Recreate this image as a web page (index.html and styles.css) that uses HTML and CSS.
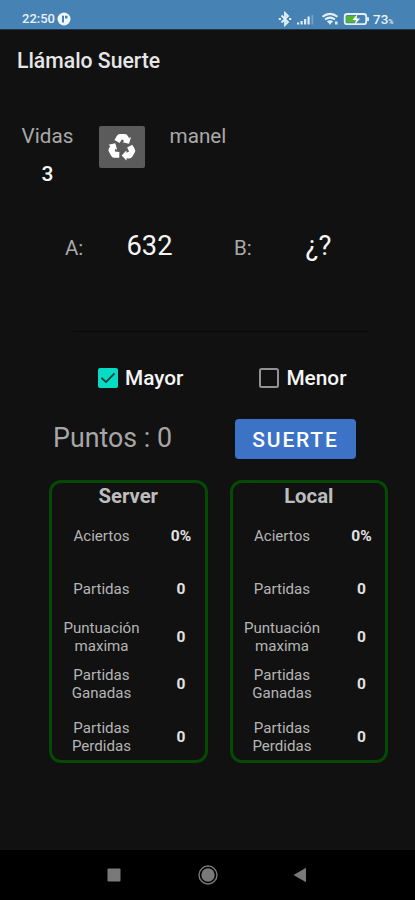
FILE: index.html
```html
<!DOCTYPE html>
<html lang="es">
<head>
<meta charset="utf-8">
<title>Llámalo Suerte</title>
<link rel="stylesheet" href="styles.css">
</head>
<body>
<div class="phone">
  <header class="status">
    <span class="clock">22:50</span>
    <svg class="notice" width="14" height="14" viewBox="0 0 14 14"><circle cx="7" cy="7" r="6.5" fill="#f0f7fc"/><path d="M5 10.500V3.700H7V10.500M8 3.700H10.500V6.500H8Z" fill="#4682b4"/></svg>
    <svg class="system" width="92" height="16" viewBox="0 0 92 16">
      <g fill="none" stroke="#e4f0f8" stroke-width="1.8">
        <path d="M3.500 4.500L10 11L7 14V2L10 5L3.500 11.500"/>
        <path d="M.8 8H3M11 8H13.200" stroke-width="2.200"/>
        <path d="M44.500 5.800Q52 0 59.500 5.800M47 8.500Q52 4.700 57 8.500M49.500 11Q52 9.500 54.500 11" stroke-width="2"/>
        <rect x="66.700" y="3" width="21.500" height="10.200" rx="2.500"/>
      </g>
      <path d="M19 13.500v-2h2.200v2zM22.500 13.500V10h2.200v3.500zM26 13.500V8h2.200v5.500zM29.500 13.500V5.500h2.200v8zM50 11L52 14L54 11ZM57 10.500h2.500v3H57zM89 6.300h2v3.700h-2z" fill="#dcecf6"/>
      <path d="M33.500 4h1.800V13.500h-1.800z" fill="#73a5cc"/>
      <path d="M68.500 5h9.500v6.400h-9.500z" fill="#55b82c"/>
      <path d="M79.500 3L74.500 9H78L76.500 14L82 7.500H78.500Z" fill="#fff"/>
    </svg>
    <span class="charge">73<small>%</small></span>
  </header>
  <h1 class="title">Llámalo Suerte</h1>

  <main class="game">
    <section class="player">
      <div class="lives"><span class="muted">Vidas</span><b>3</b></div>
      <button class="recycle" aria-label="Reiniciar">
        <svg width="28" height="30" viewBox="0 0 28 30">
          <path id="arrow" d="M6.500 8L8.600 4.200Q9.800 2 12 2H16.500Q19 2 20.200 4.400L21 6L23 5.200L21 11.800L14.500 10.200L16.200 9L14 7.300L11.500 11Z"/>
          <use href="#arrow" transform="rotate(120 14 15.500)"/>
          <use href="#arrow" transform="rotate(240 14 15.500)"/>
        </svg>
      </button>
      <span class="name muted">manel</span>
    </section>

    <section class="numbers">
      <span class="letter">A:</span><span class="number">632</span>
      <span class="letter">B:</span><span class="number">¿?</span>
    </section>
    <div class="divider"></div>

    <section class="choices">
      <label class="choice"><svg width="20" height="20" viewBox="0 0 20 20"><rect width="20" height="20" rx="2" fill="#08dbc4"/><path d="M3.500 9.800L8 14.100L16.500 5.300" fill="none" stroke="#123d38" stroke-width="1.800"/></svg>Mayor</label>
      <label class="choice"><svg width="20" height="20" viewBox="0 0 20 20"><rect x="1" y="1" width="18" height="18" rx="1.500" fill="none" stroke="#929292" stroke-width="2"/></svg>Menor</label>
    </section>

    <section class="play">
      <span class="points">Puntos : 0</span>
      <button class="go">SUERTE</button>
    </section>

    <section class="cards">
      <article class="card">
        <h2>Server</h2>
        <dl>
          <dt>Aciertos</dt><dd>0%</dd>
          <dt>Partidas</dt><dd>0</dd>
          <dt>Puntuación<br>maxima</dt><dd>0</dd>
          <dt>Partidas<br>Ganadas</dt><dd>0</dd>
          <dt>Partidas<br>Perdidas</dt><dd>0</dd>
        </dl>
      </article>
      <article class="card">
        <h2>Local</h2>
        <dl>
          <dt>Aciertos</dt><dd>0%</dd>
          <dt>Partidas</dt><dd>0</dd>
          <dt>Puntuación<br>maxima</dt><dd>0</dd>
          <dt>Partidas<br>Ganadas</dt><dd>0</dd>
          <dt>Partidas<br>Perdidas</dt><dd>0</dd>
        </dl>
      </article>
    </section>
  </main>

  <nav class="nav">
    <svg width="14" height="14" viewBox="0 0 14 14"><rect x=".5" y=".5" width="13" height="13" rx="1" fill="#797979"/></svg>
    <svg width="20" height="20" viewBox="0 0 20 20"><circle cx="10" cy="10" r="6.700" fill="#797979"/><circle cx="10" cy="10" r="9" fill="none" stroke="#797979" stroke-width="1.400"/></svg>
    <svg class="back" width="14" height="16" viewBox="0 0 14 16"><path d="M.5 8L13 .8V15.200Z" fill="#797979"/></svg>
  </nav>
</div>
</body>
</html>
```
FILE: styles.css
```css
* { box-sizing: border-box; }
body { margin: 0; background: #111; font-family: Roboto, sans-serif; }
button { border: 0; padding: 0; font: inherit; }
svg { display: block; flex: none; }

.phone { width: 415px; height: 900px; display: flex; flex-direction: column; background: #111; color: #f5f5f5; }

.status { height: 30px; flex: none; display: flex; align-items: center; padding: 8px 21px 0 22px; background: #4682b4; border-bottom: 1px solid #203344; color: #e8f2f9; }
.clock { width: 35px; font-size: 13px; font-weight: 500; }
.system { margin-left: auto; }
.charge { width: 24px; padding-left: 3px; font-size: 13.5px; font-weight: 500; white-space: nowrap; }
.charge small { font-size: 7px; }

.title { height: 60px; flex: none; margin: 0; padding-left: 17px; font-size: 21.2px; line-height: 61px; font-weight: 500; color: #e6e6e6; }
.game { flex: 1; }
.muted { color: #a9a9a9; }

.player { height: 110px; display: flex; align-items: flex-start; padding: 34px 0 0 21px; font-size: 20.7px; line-height: 25px; }
.lives { width: 53px; display: flex; flex-direction: column; align-items: center; gap: 13px; }
.lives b { font-weight: 500; font-size: 21px; }
.recycle { width: 46px; height: 42px; margin: 2px 0 0 25px; border-radius: 2px; background: #5b5b5b; display: flex; align-items: center; justify-content: center; fill: #fff; }
.name { margin-left: 24.5px; }

.numbers { height: 90px; display: grid; grid-template-columns: 46px 97px 72px 77px; justify-content: start; padding: 30px 0 0 65px; line-height: 32px; }
.letter { font-size: 20.5px; color: #a9a9a9; padding-top: 2px; }
.letter + .number { text-align: center; }
.number { font-size: 27.3px; }
.numbers .number:nth-child(2) { padding-right: 20px; }
.numbers .letter:nth-child(3) { padding-left: 26px; }
.divider { height: 1px; margin: 41px 47px 0 73px; background: #080808; }

.choices { height: 76px; display: flex; padding: 33px 0 0 98px; gap: 76px; }
.choice { display: flex; align-items: center; height: 26px; gap: 7px; font-size: 20.8px; font-weight: 500; }

.play { height: 72px; display: flex; align-items: flex-start; padding: 11px 0 0 53px; }
.points { width: 182px; font-size: 26.8px; line-height: 38px; color: #a6a6a6; }
.go { width: 121px; height: 40px; border-radius: 4px; background: #3d73c7; color: #fff; font-size: 21px; font-weight: 500; letter-spacing: 1.8px; line-height: 42px; }

.cards { display: flex; gap: 22px; padding-left: 49px; }
.card { width: 158.5px; height: 283px; border: 3px solid #044904; border-radius: 12px; }
.card h2 { margin: 0; height: 27px; font-size: 20.3px; line-height: 26px; font-weight: 700; text-align: center; color: #bdbdbd; }
.card dl { margin: 0; display: grid; grid-template-columns: 99px 60px; grid-template-rows: 52px 54px 42px 52px 54px; align-items: center; text-align: center; }
.card dt { padding-top: 1px; font-size: 15.1px; line-height: 17.5px; color: #b5b5b5; }
.card dd { margin: 0; font-size: 15.5px; font-weight: 700; color: #e2e2e2; }

.nav { height: 50px; flex: none; display: flex; align-items: center; gap: 77px; padding-left: 107px; background: #000; }
.nav .back { margin-left: -2px; }
```
